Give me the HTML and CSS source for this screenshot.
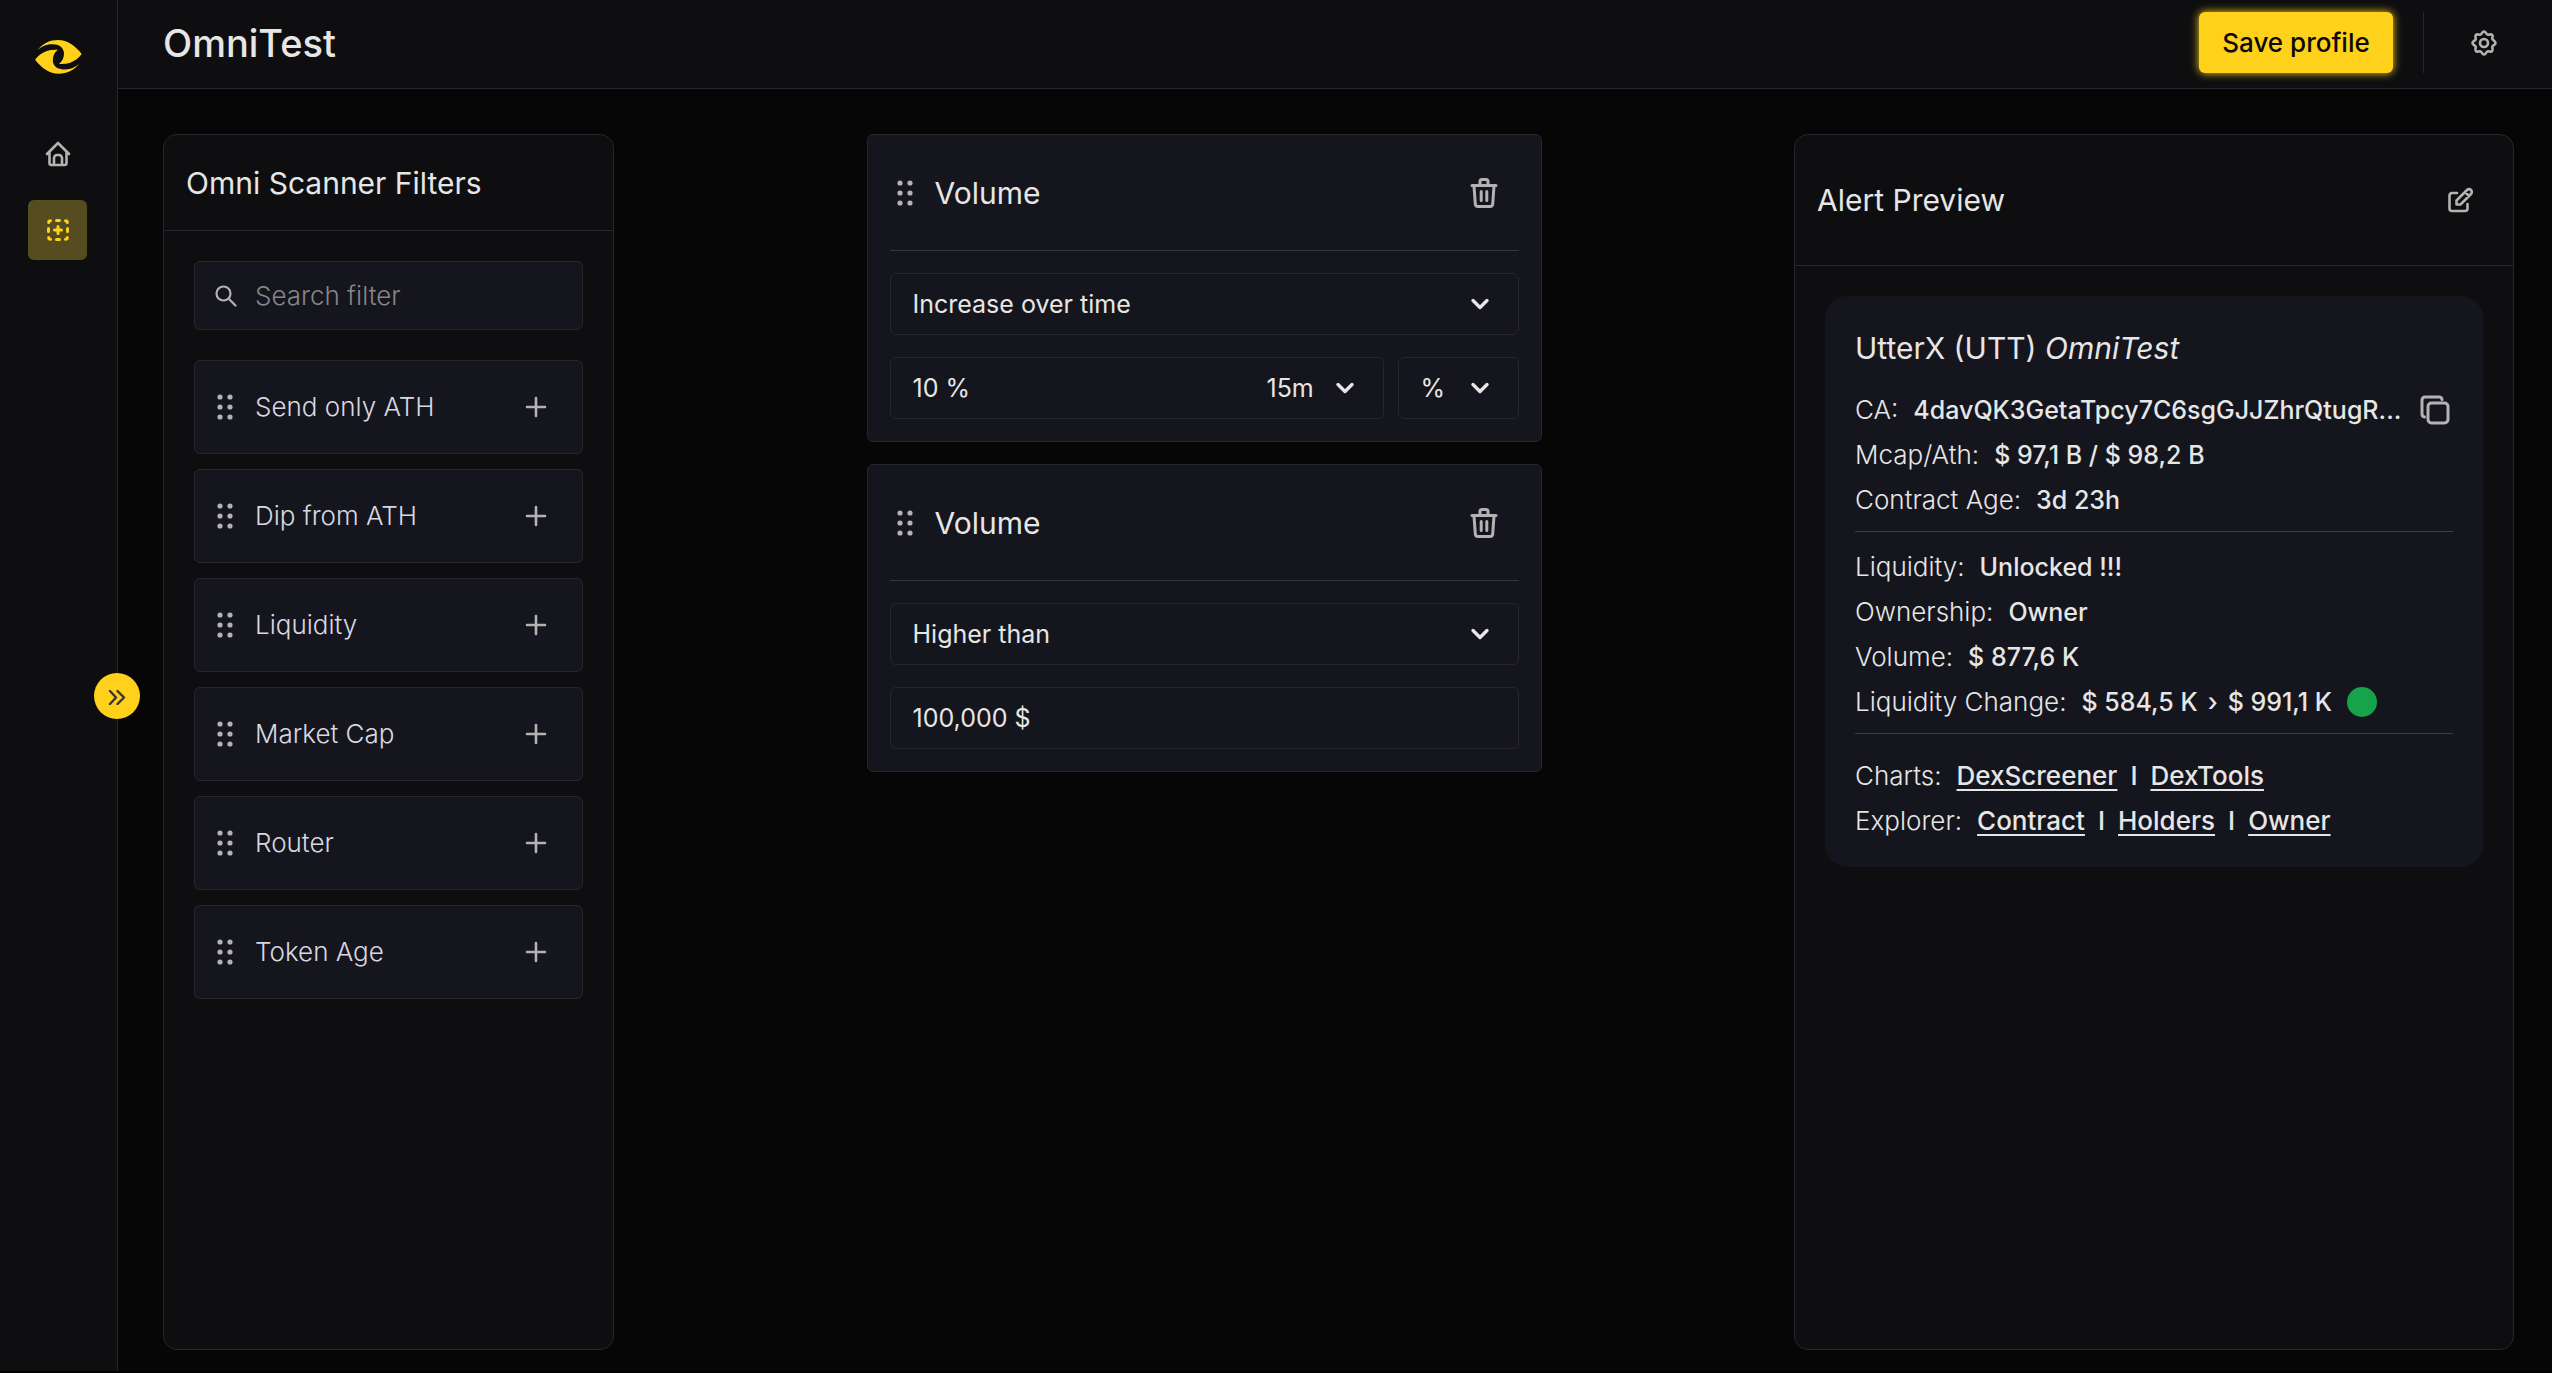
FILE: index.html
```html
<!DOCTYPE html>
<html lang="en">
<head>
<meta charset="utf-8">
<meta name="viewport" content="width=device-width, initial-scale=1">
<title>OmniTest</title>
<link rel="stylesheet" href="styles.css">
</head>
<body>
<svg class="sprite" aria-hidden="true">
  <symbol id="grip" viewBox="0 0 16 26"><g fill="currentColor"><circle cx="3" cy="3" r="2.6"/><circle cx="13" cy="3" r="2.6"/><circle cx="3" cy="13" r="2.6"/><circle cx="13" cy="13" r="2.6"/><circle cx="3" cy="23" r="2.6"/><circle cx="13" cy="23" r="2.6"/></g></symbol>
  <symbol id="plus" viewBox="0 0 22 22"><path d="M11 2v18M2 11h18" fill="none" stroke="currentColor" stroke-width="2.6" stroke-linecap="round"/></symbol>
  <symbol id="chevron" viewBox="0 0 20 12"><path d="M3 2.500l7 7 7-7" fill="none" stroke="currentColor" stroke-width="3.400" stroke-linecap="round" stroke-linejoin="round"/></symbol>
  <symbol id="trash" viewBox="0 0 28 32"><path d="M2 8.500h24M10 8V4.500a2 2 0 0 1 2-2h4a2 2 0 0 1 2 2V8M4 9l1.300 18a2.700 2.700 0 0 0 2.700 2.500h12a2.700 2.700 0 0 0 2.700-2.500L24 9M11.200 14.500v9M16.800 14.500v9" fill="none" stroke="currentColor" stroke-width="3" stroke-linecap="round" stroke-linejoin="round"/></symbol>
</svg>
<div class="app">
  <aside class="sidebar">
    <a class="logo" href="#" aria-label="Omni">
      <svg width="47" height="34" viewBox="0 0 47 34" fill="currentColor"><path id="lobe" d="M2 10.700C8 3 15 0 23 0c9.500 0 17.500 6 23.700 14-1.500 2-3 3.500-4.700 5-4.500 3.500-10 5.500-18 5 3.500-2.500 5-6.500 5-11C28.500 7.500 24 4.300 18 4.300 11.500 4 6 6.500 2 10.700z"/><use href="#lobe" transform="rotate(180 23.400 16.900)"/></svg>
    </a>
    <nav class="nav" aria-label="Main">
      <a class="nav-link" href="#" aria-label="Home"><svg width="26" height="26" viewBox="0 0 26 26" fill="none" stroke="currentColor" stroke-width="2.600" stroke-linecap="round" stroke-linejoin="round"><path d="M2 13L13 2l11 11M4.500 11v11a2 2 0 0 0 2 2h13a2 2 0 0 0 2-2V11"/><path d="M9 23.500V17a3 3 0 0 1 3-3h2a3 3 0 0 1 3 3v6.500"/></svg></a>
      <a class="nav-link active" href="#" aria-label="Scanner" aria-current="page"><svg width="24" height="24" viewBox="0 0 24 24" fill="none" stroke="currentColor" stroke-width="3" stroke-linecap="round" stroke-linejoin="round"><path d="M2.700 4.500q0-1.800 1.800-1.800M10.500 2.500h3M19.500 2.700q1.800 0 1.800 1.800M21.500 10.500v3M21.300 19.500q0 1.800-1.800 1.800M13.500 21.500h-3M4.500 21.300q-1.800 0-1.800-1.800M2.500 13.500v-3M12 8.500v7M8.500 12h7"/></svg></a>
    </nav>
    <button class="toggle" type="button" aria-label="Expand sidebar"><svg width="18" height="18" viewBox="0 0 18 18" fill="none" stroke="currentColor" stroke-width="2.400" stroke-linecap="round" stroke-linejoin="round"><path d="M2 4l6 6.500L2 17M9.500 4l6.500 6.500L9.500 17"/></svg></button>
  </aside>
  <div class="page">
    <header class="topbar">
      <h1>OmniTest</h1>
      <div class="actions">
        <button class="save" type="button">Save profile</button>
        <span class="rule"></span>
        <button class="icon-button" type="button" aria-label="Settings"><svg width="26" height="26" viewBox="0 0 26 26" fill="none" stroke="currentColor" stroke-width="2.600" stroke-linejoin="round"><path d="M13 1.500c2 0 2 2.500 3.500 3.100S19.700 3.500 21.100 4.900s-.3 2.500.3 4S24.500 11 24.500 13s-2.500 2-3.100 3.500 1.100 3.200-.3 4.600-3.100-.3-4.600.3S15 24.500 13 24.500s-2-2.500-3.500-3.100-3.200 1.100-4.600-.3.300-3.100-.3-4.600S1.500 15 1.500 13s2.500-2 3.100-3.500S3.500 6.300 4.900 4.900s3.100.3 4.600-.3S11 1.500 13 1.500z"/><circle cx="13" cy="13" r="4"/></svg></button>
      </div>
    </header>
    <main class="board">
      <section class="panel filters">
        <h2 class="panel-head">Omni Scanner Filters</h2>
        <div class="panel-body">
          <label class="search"><svg width="22" height="22" viewBox="0 0 22 22" fill="none" stroke="currentColor" stroke-width="2.200" stroke-linecap="round"><circle cx="8.500" cy="8.500" r="7"/><path d="M13.500 13.500l7 7"/></svg><input type="search" placeholder="Search filter" aria-label="Search filter"></label>
          <ul class="filter-list">
            <li><svg class="grip"><use href="#grip"/></svg><span>Send only ATH</span><button type="button" aria-label="Add Send only ATH"><svg><use href="#plus"/></svg></button></li>
            <li><svg class="grip"><use href="#grip"/></svg><span>Dip from ATH</span><button type="button" aria-label="Add Dip from ATH"><svg><use href="#plus"/></svg></button></li>
            <li><svg class="grip"><use href="#grip"/></svg><span>Liquidity</span><button type="button" aria-label="Add Liquidity"><svg><use href="#plus"/></svg></button></li>
            <li><svg class="grip"><use href="#grip"/></svg><span>Market Cap</span><button type="button" aria-label="Add Market Cap"><svg><use href="#plus"/></svg></button></li>
            <li><svg class="grip"><use href="#grip"/></svg><span>Router</span><button type="button" aria-label="Add Router"><svg><use href="#plus"/></svg></button></li>
            <li><svg class="grip"><use href="#grip"/></svg><span>Token Age</span><button type="button" aria-label="Add Token Age"><svg><use href="#plus"/></svg></button></li>
          </ul>
        </div>
      </section>

      <div class="rules">
        <section class="card">
          <div class="card-head"><svg class="grip"><use href="#grip"/></svg><h2>Volume</h2><button class="delete" type="button" aria-label="Delete rule"><svg><use href="#trash"/></svg></button></div>
          <div class="field select"><select aria-label="Condition"><option>Increase over time</option></select><svg class="chevron"><use href="#chevron"/></svg></div>
          <div class="row">
            <div class="field amount"><input type="text" value="10 %" aria-label="Amount"><div class="select period"><select aria-label="Period"><option>15m</option></select><svg class="chevron"><use href="#chevron"/></svg></div></div>
            <div class="field select unit"><select aria-label="Unit"><option>%</option></select><svg class="chevron"><use href="#chevron"/></svg></div>
          </div>
        </section>
        <section class="card">
          <div class="card-head"><svg class="grip"><use href="#grip"/></svg><h2>Volume</h2><button class="delete" type="button" aria-label="Delete rule"><svg><use href="#trash"/></svg></button></div>
          <div class="field select"><select aria-label="Condition"><option>Higher than</option></select><svg class="chevron"><use href="#chevron"/></svg></div>
          <div class="field"><input type="text" value="100,000 $" aria-label="Amount"></div>
        </section>
      </div>

      <section class="panel preview">
        <div class="panel-head tall"><h2>Alert Preview</h2><button class="icon-button" type="button" aria-label="Edit"><svg width="26" height="26" viewBox="0 0 26 26" fill="none" stroke="currentColor" stroke-width="2.600" stroke-linecap="round" stroke-linejoin="round"><path d="M9 6H4a2.500 2.500 0 0 0-2.500 2.500v13A2.500 2.500 0 0 0 4 24h13a2.500 2.500 0 0 0 2.500-2.500V17"/><path d="M8.500 17.500v-4L19 3a2.800 2.800 0 0 1 4 4L12.500 17.500z M17 5l4 4"/></svg></button></div>
        <div class="panel-body">
          <article class="alert">
            <h3>UtterX (UTT) <em>OmniTest</em></h3>
            <dl>
              <div><dt>CA:</dt><dd class="address">4davQK3GetaTpcy7C6sgGJJZhrQtugR...</dd><dd class="copy"><button class="icon-button" type="button" aria-label="Copy address"><svg width="30" height="30" viewBox="0 0 30 30" fill="none" stroke="currentColor" stroke-width="3" stroke-linejoin="round" stroke-linecap="round"><rect x="8" y="8" width="20" height="20" rx="3.500"/><path d="M4.500 22A3 3 0 0 1 2 19V5a3 3 0 0 1 3-3h14a3 3 0 0 1 3 2.500"/></svg></button></dd></div>
              <div><dt>Mcap/Ath:</dt><dd>$ 97,1 B / $ 98,2 B</dd></div>
              <div><dt>Contract Age:</dt><dd>3d 23h</dd></div>
            </dl>
            <dl class="security">
              <div><dt>Liquidity:</dt><dd>Unlocked !!!</dd></div>
              <div><dt>Ownership:</dt><dd>Owner</dd></div>
              <div><dt>Volume:</dt><dd>$ 877,6 K</dd></div>
              <div><dt>Liquidity Change:</dt><dd class="change"><span>$ 584,5 K</span><span>›</span><span>$ 991,1 K</span></dd><dd class="dot"></dd></div>
            </dl>
            <dl class="links">
              <div><dt>Charts:</dt><dd><a href="#">DexScreener</a><span>I</span><a href="#">DexTools</a></dd></div>
              <div><dt>Explorer:</dt><dd><a href="#">Contract</a><span>I</span><a href="#">Holders</a><span>I</span><a href="#">Owner</a></dd></div>
            </dl>
          </article>
        </div>
      </section>
    </main>
  </div>
</div>
</body>
</html>
```
FILE: styles.css
```css
* { box-sizing: border-box; }
body, h1, h2, h3, ul, dl, dd { margin: 0; padding: 0; }
body {
  background: #000;
  color: #e6e6e6;
  font: 400 26px/36px Inter, "Open Sans", sans-serif;
}
button, input, select {
  margin: 0;
  padding: 0;
  border: 0;
  background: none;
  color: inherit;
  font: inherit;
}
button { cursor: pointer; }
svg { display: block; flex: none; }
h2, h3 { font-size: 30px; line-height: 40px; font-weight: 400; }
.sprite { position: absolute; width: 0; height: 0; }

.app {
  display: flex;
  min-height: calc(100vh - 2px);
  background: #060606;
}

/* Sidebar */
.sidebar {
  position: relative;
  flex: none;
  width: 118px;
  padding-top: 40px;
  border-right: 1px solid #26262c;
  background: #0e0e10;
}
.logo { display: flex; justify-content: center; color: #ffd11a; }
.nav {
  display: flex;
  flex-direction: column;
  align-items: center;
  gap: 16px;
  margin-top: 50px;
  padding-right: 2px;
}
.nav-link {
  display: flex;
  align-items: center;
  justify-content: center;
  width: 59px;
  height: 60px;
  border-radius: 6px;
  color: #b3b3b3;
}
.nav-link.active { background: #554c20; color: #ffd11a; }
.toggle {
  position: absolute;
  top: 673px;
  right: -23px;
  display: grid;
  place-items: center;
  width: 46px;
  height: 46px;
  border-radius: 50%;
  background: #ffd11a;
  color: #3a3630;
}

/* Header */
.page { flex: 1; min-width: 0; display: flex; flex-direction: column; }
.topbar {
  display: flex;
  align-items: center;
  justify-content: space-between;
  height: 89px;
  padding: 0 55px 3px 45px;
  border-bottom: 1px solid #26262c;
  background: #0e0e10;
}
h1 { font-size: 38px; line-height: 48px; font-weight: 500; }
.actions { display: flex; align-items: center; }
.save {
  width: 194px;
  height: 61px;
  border-radius: 6px;
  background: #ffd11a;
  box-shadow: 0 0 8px #ffd11a;
  color: #0a0a0a;
  font-weight: 500;
}
.rule { width: 1px; height: 61px; margin: 0 47px 0 30px; background: #26262c; }
.icon-button { display: flex; color: #b3b3b3; }

/* Board */
.board {
  flex: 1;
  display: flex;
  justify-content: space-between;
  gap: 24px;
  padding: 45px 38px 21px 45px;
}
.panel {
  border: 1px solid #26262c;
  border-radius: 14px;
  background: #0e0e10;
}
.filters { width: 451px; }
.preview { width: 720px; }
.panel-head {
  display: flex;
  align-items: center;
  justify-content: space-between;
  height: 96px;
  padding: 0 39px 0 22px;
  border-bottom: 1px solid #26262c;
}
.panel-head.tall { height: 131px; }
.panel-body { padding: 30px; }

.search, .filter-list li {
  display: flex;
  align-items: center;
  border: 1px solid #26262c;
  border-radius: 6px;
  background: #15151d;
}
.search { gap: 18px; height: 69px; padding: 0 20px; color: #b3b3b3; }
.search input {
  flex: 1;
  min-width: 0;
  outline: 0;
  font-weight: 300;
}
.search input::placeholder { color: #868686; opacity: 1; }
.filter-list {
  display: flex;
  flex-direction: column;
  gap: 15px;
  margin-top: 30px;
  list-style: none;
}
.filter-list li {
  height: 94px;
  padding: 0 35px 0 22px;
  color: #d8d8e0;
  font-weight: 300;
}
.filter-list span { flex: 1; margin-left: 22px; }
.filter-list button, .filter-list button svg { width: 22px; height: 22px; color: #b3b3b3; }
.grip { width: 16px; height: 26px; color: #b3b3b3; }

/* Rule cards */
.rules {
  flex: 0 1 675px;
  min-width: 0;
  display: flex;
  flex-direction: column;
  gap: 22px;
}
.card {
  display: flex;
  flex-direction: column;
  gap: 22px;
  padding: 0 22px 22px;
  border: 1px solid #26262c;
  border-radius: 6px;
  background: #15151d;
}
.card-head {
  display: flex;
  align-items: center;
  height: 116px;
  padding: 0 21px 0 7px;
  border-bottom: 1px solid #35353f;
}
.card-head h2 { flex: 1; margin-left: 22px; }
.delete, .delete svg { width: 28px; height: 32px; color: #b3b3b3; }
.field {
  display: flex;
  align-items: center;
  height: 62px;
  padding: 0 22px;
  border: 1px solid #26262c;
  border-radius: 6px;
  font-size: 25px;
}
.field input { flex: 1; min-width: 0; outline: 0; }
.select { display: flex; align-items: center; }
.select select { flex: 1; min-width: 0; appearance: none; outline: 0; }
.chevron { width: 20px; height: 12px; margin-right: 6px; }
.row { display: flex; gap: 14px; }
.amount { flex: 1; min-width: 0; }
.period { width: 94px; }
.unit { width: 121px; }

/* Alert preview */
.alert {
  padding: 32px 30px 24px;
  border-radius: 22px;
  background: #15151d;
}
.alert dl { padding: 19px 0 9px; border-bottom: 1px solid #3c3c46; }
.alert .security { padding-top: 12px; }
.alert .links { border: 0; padding-bottom: 0; }
.alert dl > div { display: flex; align-items: center; gap: 15px; height: 45px; }
.alert dt { flex: none; font-weight: 300; }
.alert dd { font-size: 25px; font-weight: 500; white-space: nowrap; }
.address { flex: 1; min-width: 0; }
.copy { padding-right: 3px; }
.change { display: flex; gap: 10px; }
.dot { width: 30px; height: 30px; border-radius: 50%; background: #16a34a; }
.alert a { color: inherit; text-decoration-thickness: 2px; text-underline-offset: 4px; }
.alert .links dd { font-size: 26px; }
.links span { margin: 0 13px; }
```
